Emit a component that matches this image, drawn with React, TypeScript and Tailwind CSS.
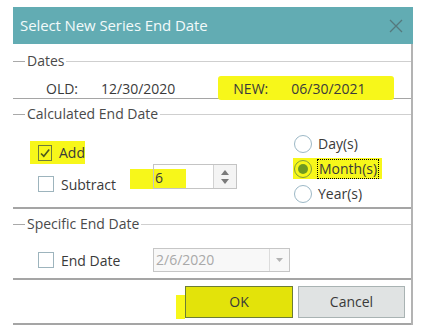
import React from "react";

const Check = ({ checked = false, dark = false }: { checked?: boolean; dark?: boolean }) => (
  <div
    className={`w-[16px] h-[16px] border flex items-center justify-center ${
      dark ? "border-[#6f7d3a] bg-transparent" : "border-[#9db4bd] bg-white"
    }`}
  >
    {checked && (
      <svg width="12" height="12" viewBox="0 0 12 12">
        <path d="M2 6.5 L4.8 9.2 L10.2 2.6" fill="none" stroke="#4d5a1f" strokeWidth="1.6" />
      </svg>
    )}
  </div>
);

const Radio = ({ checked = false }: { checked?: boolean }) => (
  <div
    className={`w-[18px] h-[18px] rounded-full border flex items-center justify-center ${
      checked ? "border-[#7f9d3a]" : "border-[#9cb8c6] bg-white"
    }`}
  >
    {checked && <div className="w-[10px] h-[10px] rounded-full bg-[#6f9a22]" />}
  </div>
);

const GroupHeader = ({ label, className = "" }: { label: string; className?: string }) => (
  <div className={`flex items-center h-[16px] ${className}`}>
    <div className="w-[12px] h-px bg-[#a9a9a9]" />
    <span className="px-[2px] text-[14px] leading-[16px] text-[#4a4a4a]">{label}</span>
    <div className="flex-1 h-px bg-[#cfcfcf]" />
  </div>
);

export default function App() {
  return (
    <div
      className="w-[421px] h-[331px] bg-white overflow-hidden text-[#3a3a3a]"
      style={{ fontFamily: '"Open Sans", "Noto Sans", sans-serif' }}
    >
      <div className="ml-[13px] mt-[7px] w-[400px]">
        {/* Title bar */}
        <div className="h-[37px] bg-[#62acb3] flex items-center justify-between pl-[7px] pr-[10px]">
          <span className="text-[15px] text-[#f2fafa] tracking-[-0.1px]">Select New Series End Date</span>
          <svg width="14" height="14" viewBox="0 0 14 14">
            <path d="M1 1 L13 13 M13 1 L1 13" stroke="#55797d" strokeWidth="1.3" />
          </svg>
        </div>

        <div className="border-r-2 border-[#b3b3b3]">
          {/* Dates */}
          <GroupHeader label="Dates" className="pt-[9px] box-content" />
          <div className="flex items-center h-[18px] mt-[10px] text-[14px]">
            <span className="ml-[33px] w-[55px]">OLD:</span>
            <span>12/30/2020</span>
            <div className="ml-[43px] h-[24px] w-[176px] bg-[#f7f71a] flex items-center rounded-[3px]">
              <span className="ml-[15px] w-[58px]">NEW:</span>
              <span>06/30/2021</span>
            </div>
          </div>
          <div className="h-px bg-[#a5a5a5] mt-[1px]" />

          {/* Calculated End Date */}
          <GroupHeader label="Calculated End Date" className="mt-[7px]" />
          <div className="flex items-start h-[85px]">
            <div className="ml-[17px] w-[100px] flex flex-col">
              <div className="mt-[19px] h-[23px] w-[55px] bg-[#f7f71a] flex items-center gap-[7px] pl-[8px] text-[14px]">
                <Check checked dark />
                <span>Add</span>
              </div>
              <div className="mt-[12px] h-[16px] flex items-center gap-[7px] pl-[8px] text-[14px]">
                <Check />
                <span>Subtract</span>
              </div>
            </div>
            <div className="mt-[42px] flex items-end">
              <div className="w-[23px] h-[20px] bg-[#f7f71a]" />
              <div className="w-[84px] h-[25px] border border-[#c4c4c4] flex">
                <div className="flex-1 flex items-end">
                  <div className="w-[32px] h-[19px] bg-[#f7f71a] text-[14px] leading-[17px] pl-[1px]">6</div>
                </div>
                <div className="w-[23px] border-l border-[#d2d2d2] bg-[#f4f4f4] flex flex-col items-center justify-center gap-[4px]">
                  <svg width="8" height="5" viewBox="0 0 8 5">
                    <path d="M0 5 L4 0 L8 5 Z" fill="#7a7a7a" />
                  </svg>
                  <svg width="8" height="5" viewBox="0 0 8 5">
                    <path d="M0 0 L4 5 L8 0 Z" fill="#7a7a7a" />
                  </svg>
                </div>
              </div>
            </div>
            <div className="ml-[56px] mt-[9px] flex flex-col text-[14px]">
              <div className="h-[25px] flex items-center gap-[6px] pl-[1px]">
                <Radio />
                <span>Day(s)</span>
              </div>
              <div className="h-[25px] flex items-center">
                <div className="h-[21px] bg-[#f7f71a] flex items-center gap-[5px] pl-[1px] pr-[3px]">
                  <Radio checked />
                  <span className="border border-dotted border-black leading-[18px] px-[1px]">Month(s)</span>
                </div>
              </div>
              <div className="h-[25px] flex items-center gap-[6px] pl-[1px]">
                <Radio />
                <span>Year(s)</span>
              </div>
            </div>
          </div>
          <div className="h-[2px] bg-[#a5a5a5]" />

          {/* Specific End Date */}
          <GroupHeader label="Specific End Date" className="mt-[7px]" />
          <div className="flex items-start h-[46px] pt-[16px]">
            <div className="ml-[25px] w-[115px] h-[24px] flex items-center gap-[7px] text-[14px]">
              <Check />
              <span>End Date</span>
            </div>
            <div className="w-[137px] h-[24px] border border-[#c6c6c6] bg-[#f8f8f8] flex">
              <span className="flex-1 text-[14px] leading-[22px] pl-[2px] text-[#a9a9a9]">2/6/2020</span>
              <div className="w-[20px] border-l border-[#dcdcdc] flex items-center justify-center">
                <svg width="7" height="4" viewBox="0 0 7 4">
                  <path d="M0 0 L3.5 4 L7 0 Z" fill="#b3b3b3" />
                </svg>
              </div>
            </div>
          </div>
          <div className="h-[2px] bg-[#a5a5a5]" />

          {/* Buttons */}
          <div className="flex items-center h-[43px]">
            <div className="ml-[163px] w-[9px] h-[24px] mt-[10px] bg-[#f7f71a]" />
            <div className="w-[108px] h-[32px] border border-[#6c7d36] bg-[#e3e30a] flex items-center justify-center text-[14px]">
              OK
            </div>
            <div className="ml-[5px] w-[107px] h-[32px] border border-[#a9b3b3] bg-[#e0e3e3] flex items-center justify-center text-[14px]">
              Cancel
            </div>
          </div>
          <div className="h-[2px] bg-[#a5a5a5]" />
        </div>
      </div>
    </div>
  );
}
